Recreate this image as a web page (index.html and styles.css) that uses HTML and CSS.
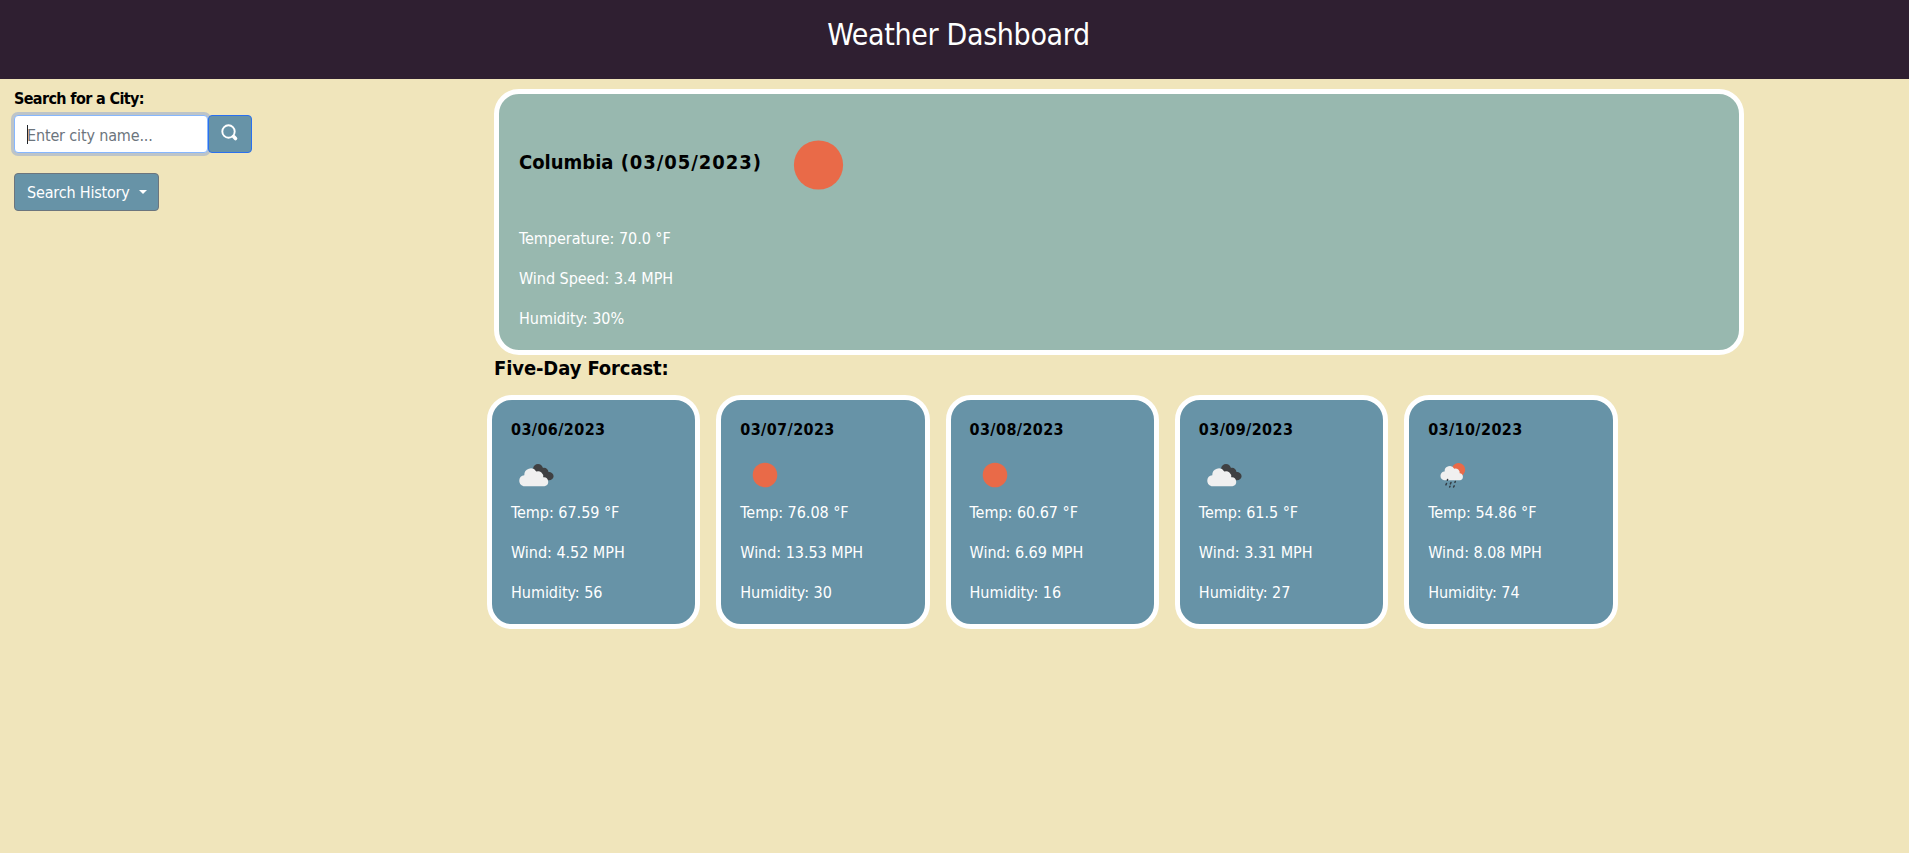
FILE: index.html
```html
<!DOCTYPE html>
<html lang="en">
<head>
<meta charset="utf-8">
<title>Weather Dashboard</title>
<link rel="stylesheet" href="styles.css">
</head>
<body>
<svg width="0" height="0" class="defs">
  <symbol id="sun" viewBox="0 0 50 50"><circle cx="25" cy="25" r="12.3" fill="#e96a48"/></symbol>
  <symbol id="clouds" viewBox="0 0 50 50">
    <path fill="#3f4042" d="M22 18.500C22.500 15.500 24.500 14 27 14C29.500 14 31 15.500 32 18C34.500 17.300 37.200 19 37.500 22C40.500 22 42.600 24 42.600 26.200C42.600 28.500 40.500 30.200 38 30.200L34 30L25 24Z"/>
    <path fill="#f0f0f0" d="M12.500 36.200A5.600 5.600 0 0 1 13.300 25.200A6.500 6.500 0 0 1 25.300 21.500A5.200 5.200 0 0 1 32.200 27.300A4.500 4.500 0 0 1 33.500 36.200Z"/>
  </symbol>
  <symbol id="shower" viewBox="0 0 50 50">
    <circle cx="30.500" cy="19.800" r="6.700" fill="#e96a48"/>
    <path fill="#f0f0f0" d="M16 30.200A4.400 4.400 0 0 1 16.600 21.500A5.200 5.200 0 0 1 26.300 18.700A4.200 4.200 0 0 1 31.700 23.300A3.500 3.500 0 0 1 32.200 30.200Z"/>
    <path stroke="#333b42" stroke-width="1.500" stroke-linecap="round" d="M19.600 29.400l-.3.900M23 32.500l-.6 1.400M18.500 33.500l-.6 1.400M27.300 31.500l-.4.800M22 36.300l-.3.700M26.200 35.800l-.6 1.200"/>
  </symbol>
</svg>
<header class="header"><h1>Weather Dashboard</h1></header>
<div class="layout">
  <aside class="sidebar">
    <label class="label" for="city">Search for a City:</label>
    <div class="search">
      <div class="field"><input id="city" class="input" type="text" placeholder="Enter city name..."><span class="cursor"></span></div>
      <button class="btn search-btn" aria-label="Search">
        <svg width="18" height="18" viewBox="0 0 18 18" fill="none" stroke="#fff"><circle cx="7.500" cy="7.500" r="6.200" stroke-width="1.900"/><path d="M12.600 12.600l1.900 1.900" stroke-width="3.600" stroke-linecap="round"/></svg>
      </button>
    </div>
    <button class="btn history-btn">Search History<span class="arrow"></span></button>
  </aside>
  <main class="main">
    <section class="today">
      <div class="today-head"><h2>Columbia<span class="date"> (03/05/2023)</span></h2><svg class="today-icon"><use href="#sun"/></svg></div>
      <p>Temperature: 70.0 °F</p>
      <p>Wind Speed: 3.4 MPH</p>
      <p>Humidity: 30%</p>
    </section>
    <h2 class="forecast-title">Five-Day Forcast:</h2>
    <section class="forecast">
      <article class="day"><h3>03/06/2023</h3><svg class="icon"><use href="#clouds"/></svg><p>Temp: 67.59 °F</p><p>Wind: 4.52 MPH</p><p>Humidity: 56</p></article>
      <article class="day"><h3>03/07/2023</h3><svg class="icon"><use href="#sun"/></svg><p>Temp: 76.08 °F</p><p>Wind: 13.53 MPH</p><p>Humidity: 30</p></article>
      <article class="day"><h3>03/08/2023</h3><svg class="icon"><use href="#sun"/></svg><p>Temp: 60.67 °F</p><p>Wind: 6.69 MPH</p><p>Humidity: 16</p></article>
      <article class="day"><h3>03/09/2023</h3><svg class="icon"><use href="#clouds"/></svg><p>Temp: 61.5 °F</p><p>Wind: 3.31 MPH</p><p>Humidity: 27</p></article>
      <article class="day"><h3>03/10/2023</h3><svg class="icon"><use href="#shower"/></svg><p>Temp: 54.86 °F</p><p>Wind: 8.08 MPH</p><p>Humidity: 74</p></article>
    </section>
  </main>
</div>
</body>
</html>
```
FILE: styles.css
```css
* { box-sizing: border-box; }
body {
  margin: 0;
  min-height: 100vh;
  background: #f0e5bb;
  color: #000;
  font: 16px/24px Tahoma, "DejaVu Sans Condensed", "DejaVu Sans", sans-serif;
  letter-spacing: -0.03px;
}
h1, h2, h3, p { margin: 0; }
.defs { display: block; height: 0; }
.header { height: 79px; padding-top: 17px; background: #2f1f31; color: #fff; text-align: center; }
.header h1 { font-size: 30px; line-height: 36px; font-weight: 400; letter-spacing: -0.35px; padding-left: 8px; }
.layout { display: flex; }
.sidebar { width: 494px; padding: 8px 14px; }
.label { display: block; height: 28px; font-weight: 700; letter-spacing: -0.63px; }
.search { display: flex; margin-bottom: 20px; }
.field { position: relative; }
.input {
  display: block; width: 194px; height: 38px; padding: 2px 12px 0;
  border: 1px solid #86b7fe; border-radius: 4px; background: #fff;
  box-shadow: 0 0 0 3px #bdc4c8;
  font: inherit; letter-spacing: -0.15px;
}
.input::placeholder { color: #6c757d; opacity: 1; }
.cursor { position: absolute; left: 13px; top: 10px; width: 1px; height: 19px; background: #212529; }
.btn {
  display: flex; align-items: center; height: 38px; padding: 2px 12px 0;
  border: 1px solid #6c757d; border-radius: 4px; background: #6793a7; color: #fff;
  font: inherit; letter-spacing: -0.18px; white-space: nowrap;
}
.search-btn { position: relative; width: 44px; border-color: #2b70ee; }
.search-btn svg { margin-top: -4px; flex: none; }
.history-btn { width: 145px; }
.arrow { margin: -2px 0 0 9px; border: 4px solid transparent; border-top-color: #fff; border-bottom: 0; }
.main { width: 1250px; padding-top: 10px; }
.today { height: 266px; border: 5px solid #fff; border-radius: 25px; background: #98b8af; padding: 21px 20px 0; color: #fff; }
.today-head { display: flex; height: 112px; color: #000; }
.today-head h2 { width: 249px; padding-top: 35px; white-space: nowrap; }
.today h2, .forecast-title { font-size: 20px; line-height: 24px; font-weight: 700; letter-spacing: 0; }
.today-head .date { letter-spacing: 0.95px; }
.today-icon { width: 101px; height: 100px; }
.today p + p, .day p + p { margin-top: 16px; }
.today .forecast-title { letter-spacing: 0; }
.forecast-title { height: 40px; padding-top: 1px; letter-spacing: -0.1px; }
.forecast { display: flex; gap: 15.900px; margin-left: -7px; }
.day { width: 213.400px; height: 234px; border: 5px solid #fff; border-radius: 25px; background: #6793a7; padding: 18px 19px; color: #fff; }
.day h3 { height: 32px; color: #000; font-size: 16px; line-height: 24px; letter-spacing: 0.38px; }
.icon { display: block; width: 50px; height: 50px; margin-bottom: 1px; }
```
